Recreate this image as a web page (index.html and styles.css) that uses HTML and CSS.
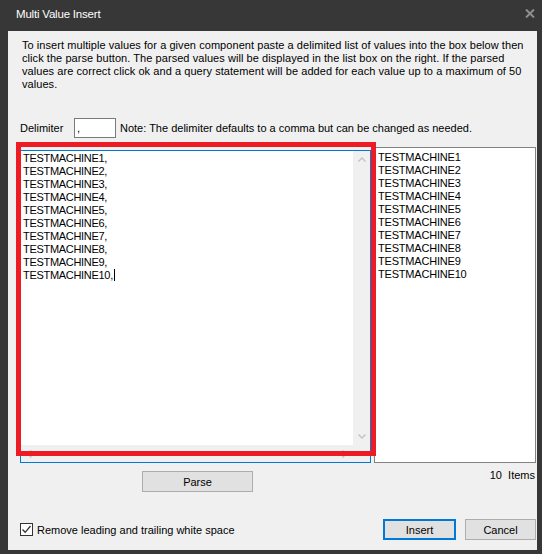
FILE: index.html
```html
<!DOCTYPE html>
<html lang="en">
<head>
    <meta charset="utf-8">
    <meta name="viewport" content="width=device-width, initial-scale=1">
    <title>Multi Value Insert</title>

    <link rel="stylesheet" href="styles.css">
</head>
<body>

<div class="window">
    <div class="titlebar">
        <span class="title">Multi Value Insert</span>
        <svg class="close" width="10" height="9" viewBox="0 0 10 9">
            <path d="M1 0.5 L9 8.5 M9 0.5 L1 8.5" stroke="#8e8e8e" stroke-width="2" fill="none"/>
        </svg>
    </div>

    <div class="panel">
        <p class="intro">
            To insert multiple values for a given component paste a delimited list of values into the box below then<br>
            click the parse button. The parsed values will be displayed in the list box on the right. If the parsed<br>
            values are correct click ok and a query statement will be added for each value up to a maximum of 50<br>
            values.
        </p>

        <div class="delim-row">
            <span class="delim-label">Delimiter</span>
            <div class="delim-input">,</div>
            <span class="delim-note">Note: The delimiter defaults to a comma but can be changed as needed.</span>
        </div>

        <div class="main">
            <div class="textbox">
                <div class="text-area">
                    <div>TESTMACHINE1,</div>
                    <div>TESTMACHINE2,</div>
                    <div>TESTMACHINE3,</div>
                    <div>TESTMACHINE4,</div>
                    <div>TESTMACHINE5,</div>
                    <div>TESTMACHINE6,</div>
                    <div>TESTMACHINE7,</div>
                    <div>TESTMACHINE8,</div>
                    <div>TESTMACHINE9,</div>
                    <div>TESTMACHINE10,<span class="caret"></span></div>
                </div>
                <div class="vscroll">
                    <svg width="8" height="5" viewBox="0 0 8 5"><path d="M0.5 4.5 L4 1 L7.5 4.5" stroke="#c2c2c2" stroke-width="1.4" fill="none"/></svg>
                    <svg width="8" height="5" viewBox="0 0 8 5"><path d="M0.5 0.5 L4 4 L7.5 0.5" stroke="#c2c2c2" stroke-width="1.4" fill="none"/></svg>
                </div>
                <div class="hscroll">
                    <svg width="5" height="8" viewBox="0 0 5 8"><path d="M4.5 0.5 L1 4 L4.5 7.5" stroke="#c2c2c2" stroke-width="1.4" fill="none"/></svg>
                    <svg width="5" height="8" viewBox="0 0 5 8"><path d="M0.5 0.5 L4 4 L0.5 7.5" stroke="#c2c2c2" stroke-width="1.4" fill="none"/></svg>
                </div>
                <div class="corner"></div>
            </div>

            <div class="listbox">
                <div>TESTMACHINE1</div>
                <div>TESTMACHINE2</div>
                <div>TESTMACHINE3</div>
                <div>TESTMACHINE4</div>
                <div>TESTMACHINE5</div>
                <div>TESTMACHINE6</div>
                <div>TESTMACHINE7</div>
                <div>TESTMACHINE8</div>
                <div>TESTMACHINE9</div>
                <div>TESTMACHINE10</div>
            </div>
        </div>

        <div class="parse-row">
            <button class="btn parse">Parse</button>
            <span class="count">10&nbsp; Items</span>
        </div>

        <div class="bottom-row">
            <label class="check">
                <span class="box">
                    <svg width="11" height="11" viewBox="0 0 11 11"><path d="M1.5 5.5 L4.2 8.3 L9.5 2" stroke="#333" stroke-width="1.3" fill="none"/></svg>
                </span>
                Remove leading and trailing white space
            </label>
            <div class="actions">
                <button class="btn insert">Insert</button>
                <button class="btn">Cancel</button>
            </div>
        </div>
    </div>

    <!-- annotation drawn on top of the screenshot -->
    <div class="highlight"></div>
</div>

</body>
</html>
```

FILE: styles.css
```css
body {
    margin: 0;
    font-family: "Liberation Sans", Arial, sans-serif;
    font-size: 11px;
    color: #000;
}
.window {
    position: relative;
    display: flex;
    flex-direction: column;
    width: 542px;
    height: 554px;
    box-sizing: border-box;
    padding: 0 5px 4px 8px;
    background-color: #373737;
}
.titlebar {
    display: flex;
    align-items: center;
    justify-content: space-between;
    height: 31px;
    padding: 0 2px 4px 8px;
    box-sizing: border-box;
}
.title {
    color: #fff;
    font-size: 11.5px;
    letter-spacing: -0.2px;
}
.panel {
    flex: 1;
    display: flex;
    flex-direction: column;
    background-color: #f0f0f0;
    padding: 0 1px 0 12px;
}
.intro {
    margin: 8px 0 0 2px;
    line-height: 13px;
    letter-spacing: 0.06px;
}
.delim-row {
    display: flex;
    align-items: center;
    margin-top: 27px;
    height: 20px;
}
.delim-label {
    width: 54px;
}
.delim-input {
    width: 38px;
    height: 18px;
    line-height: 18px;
    padding-left: 2px;
    border: 1px solid #7a7a7a;
    background-color: #fff;
    margin-right: 4px;
}
.main {
    display: flex;
    align-items: flex-end;
    margin-top: 9px;
    height: 316px;
}
.textbox {
    display: grid;
    grid-template-columns: 1fr 17px;
    grid-template-rows: 1fr 17px;
    width: 351px;
    height: 313px;
    box-sizing: border-box;
    border: 1px solid #0078d7;
    background-color: #fff;
}
.text-area {
    padding: 1px 0 0 2px;
    line-height: 13px;
    letter-spacing: -0.3px;
}
.caret {
    display: inline-block;
    width: 1px;
    height: 12px;
    margin-left: 1px;
    vertical-align: -2px;
    background-color: #000;
}
.vscroll {
    display: flex;
    flex-direction: column;
    justify-content: space-between;
    align-items: center;
    padding: 6px 0 6px;
    background-color: #f0f0f0;
}
.hscroll {
    display: flex;
    justify-content: space-between;
    align-items: center;
    padding: 0 6px;
    background-color: #f0f0f0;
}
.corner {
    background-color: #f0f0f0;
}
.listbox {
    width: 162px;
    height: 316px;
    box-sizing: border-box;
    margin-left: 3px;
    padding: 3px 0 0 3px;
    border: 1px solid #828282;
    background-color: #fff;
    line-height: 13px;
    letter-spacing: -0.2px;
}
.parse-row {
    display: flex;
    justify-content: space-between;
    align-items: flex-start;
    margin-top: 8px;
    padding-left: 122px;
}
.count {
    margin-top: -2px;
    padding-right: 1px;
}
.btn {
    font-family: inherit;
    font-size: 11px;
    color: #000;
    height: 21px;
    padding: 0;
    border: 1px solid #adadad;
    border-radius: 0;
    background-color: #e1e1e1;
}
.btn.parse {
    width: 111px;
}
.bottom-row {
    display: flex;
    justify-content: space-between;
    align-items: center;
    margin-top: auto;
    margin-bottom: 10px;
}
.check {
    display: flex;
    align-items: center;
    gap: 4px;
}
.box {
    display: grid;
    place-items: center;
    width: 11px;
    height: 11px;
    border: 1px solid #333;
    background-color: #fff;
}
.actions {
    display: flex;
    gap: 9px;
}
.actions .btn {
    width: 71px;
}
.btn.insert {
    border: 2px solid #0078d7;
    width: 73px;
}
.highlight {
    position: absolute;
    left: 16px;
    top: 142px;
    width: 350px;
    height: 304px;
    border: 5px solid #ed1c24;
}
```
